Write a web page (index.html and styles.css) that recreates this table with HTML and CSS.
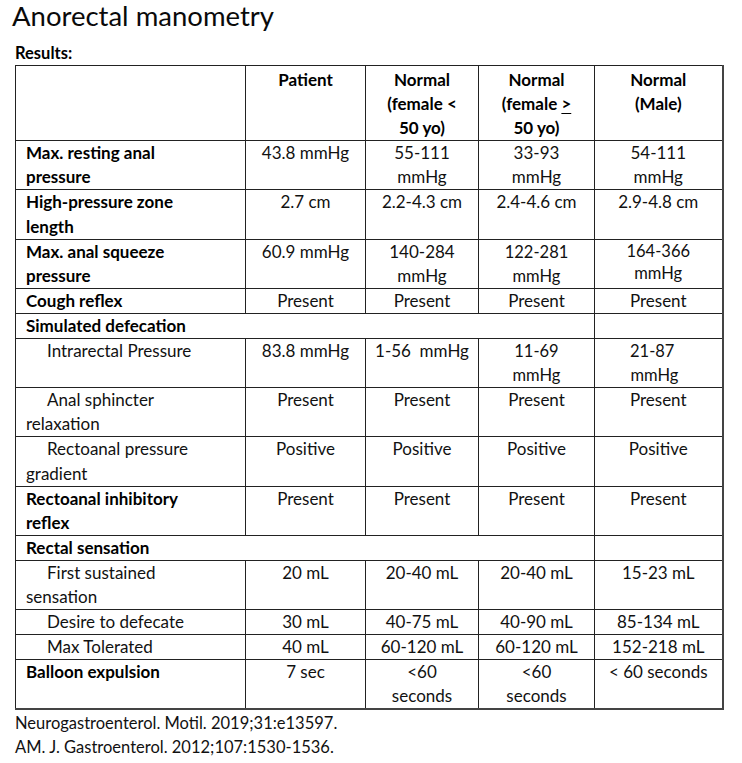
FILE: index.html
```html
<!DOCTYPE html>
<html lang="en">
<head>
<meta charset="utf-8">
<title>Anorectal manometry</title>
<link rel="stylesheet" href="styles.css">
</head>
<body>
<h1 class="title">Anorectal manometry</h1>
<p class="results">Results:</p>
<table class="grid">
  <colgroup>
    <col class="c1"><col class="c2"><col class="c3"><col class="c4"><col class="c5">
  </colgroup>
  <tr class="head">
    <th></th>
    <th>Patient</th>
    <th>Normal<br>(female &lt;<br>50 yo)</th>
    <th>Normal<br>(female <u>&gt;</u><br>50 yo)</th>
    <th>Normal<br>(Male)</th>
  </tr>
  <tr>
    <td class="lbl">Max. resting anal<br>pressure</td>
    <td>43.8 mmHg</td>
    <td>55-111<br>mmHg</td>
    <td>33-93<br>mmHg</td>
    <td>54-111<br>mmHg</td>
  </tr>
  <tr>
    <td class="lbl">High-pressure zone<br>length</td>
    <td>2.7 cm</td>
    <td>2.2-4.3 cm</td>
    <td>2.4-4.6 cm</td>
    <td>2.9-4.8 cm</td>
  </tr>
  <tr>
    <td class="lbl">Max. anal squeeze<br>pressure</td>
    <td>60.9 mmHg</td>
    <td>140-284<br>mmHg</td>
    <td class="sm">122-281<br>mmHg</td>
    <td class="sm tight">164-366<br>mmHg</td>
  </tr>
  <tr>
    <td class="lbl">Cough reflex</td>
    <td>Present</td>
    <td>Present</td>
    <td>Present</td>
    <td>Present</td>
  </tr>
  <tr>
    <td class="lbl" colspan="4">Simulated defecation</td>
    <td></td>
  </tr>
  <tr>
    <td class="sub">Intrarectal Pressure</td>
    <td>83.8 mmHg</td>
    <td>1-56&nbsp; mmHg</td>
    <td class="sm">11-69<br>mmHg</td>
    <td class="sm shift">21-87<br>&nbsp;mmHg</td>
  </tr>
  <tr>
    <td class="sub">Anal sphincter<br>relaxation</td>
    <td>Present</td>
    <td>Present</td>
    <td>Present</td>
    <td>Present</td>
  </tr>
  <tr>
    <td class="sub">Rectoanal pressure<br>gradient</td>
    <td>Positive</td>
    <td>Positive</td>
    <td>Positive</td>
    <td>Positive</td>
  </tr>
  <tr>
    <td class="lbl">Rectoanal inhibitory<br>reflex</td>
    <td>Present</td>
    <td>Present</td>
    <td>Present</td>
    <td>Present</td>
  </tr>
  <tr>
    <td class="lbl" colspan="4">Rectal sensation</td>
    <td></td>
  </tr>
  <tr>
    <td class="sub">First sustained<br>sensation</td>
    <td>20 mL</td>
    <td>20-40 mL</td>
    <td>20-40 mL</td>
    <td>15-23 mL</td>
  </tr>
  <tr>
    <td class="sub">Desire to defecate</td>
    <td>30 mL</td>
    <td>40-75 mL</td>
    <td>40-90 mL</td>
    <td>85-134 mL</td>
  </tr>
  <tr>
    <td class="sub">Max Tolerated</td>
    <td>40 mL</td>
    <td>60-120 mL</td>
    <td>60-120 mL</td>
    <td>152-218 mL</td>
  </tr>
  <tr>
    <td class="lbl">Balloon expulsion<br>&nbsp;</td>
    <td>7 sec</td>
    <td>&lt;60<br>seconds</td>
    <td>&lt;60<br>seconds</td>
    <td>&lt; 60 seconds</td>
  </tr>
</table>
<p class="refs">Neurogastroenterol. Motil. 2019;31:e13597.<br>AM. J. Gastroenterol. 2012;107:1530-1536.</p>
</body>
</html>
```

FILE: styles.css
```css
html, body {
  margin: 0;
  padding: 0;
  background: #ffffff;
}

body {
  font-family: Lato, "Liberation Sans", sans-serif;
  color: #111;
}

.title {
  margin: 0;
  padding-left: 12px;
  font-size: 27.5px;
  line-height: 32px;
  font-weight: 400;
  color: #0a0a0a;
}

.results {
  margin: 12px 0 3px 15px;
  font-size: 16.5px;
  line-height: 18px;
  font-weight: 700;
  color: #000;
}

.grid {
  margin-left: 15px;
  border-collapse: collapse;
  table-layout: fixed;
  width: 707px;
  border: 1px solid #222;
  border-right: 2px solid #444;
  border-bottom: 2px solid #444;
}

.c1 { width: 230px; }
.c2 { width: 120px; }
.c3 { width: 113px; }
.c4 { width: 116px; }
.c5 { width: 128px; }

.grid th,
.grid td {
  border: 1px solid #222;
  padding: 0 4px;
  vertical-align: top;
  text-align: center;
  font-size: 17px;
  line-height: 24.1px;
  white-space: nowrap;
}

.grid th {
  font-weight: 700;
  color: #000;
  padding-top: 2px;
}

.grid th u {
  text-underline-offset: 3px;
}

.grid td.lbl,
.grid td.sub {
  text-align: left;
  padding-left: 10px;
}

.grid td.lbl {
  font-weight: 700;
  color: #000;
}

.grid td.sub {
  text-indent: 21px;
}

.grid td.sm {
  font-size: 16.5px;
}

.grid td.tight {
  line-height: 22px;
}

.grid td.shift {
  padding-right: 16px;
}

.refs {
  margin: 2px 0 0 15px;
  font-size: 16.5px;
  line-height: 23.5px;
  color: #111;
}
```
